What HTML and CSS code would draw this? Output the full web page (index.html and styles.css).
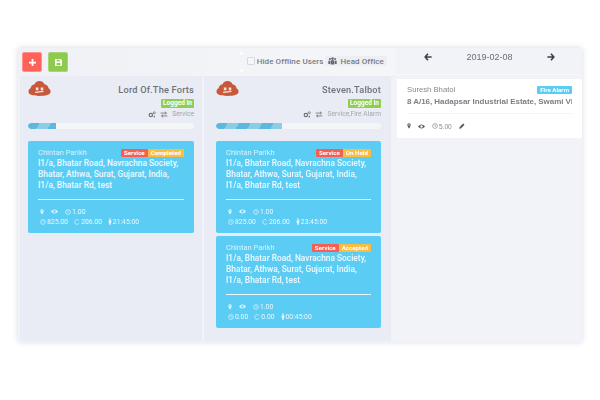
FILE: index.html
```html
<!DOCTYPE html>
<html lang="en">
<head>
<meta charset="utf-8">
<title>Dispatch board</title>
<link rel="stylesheet" href="styles.css">
</head>
<body>
<svg class="sprite" width="0" height="0" aria-hidden="true">
  <symbol id="i-pin" viewBox="0 0 10 14"><path d="M5 0a4.200 4.200 0 0 0-4.200 4.200C.8 7.200 5 13.500 5 13.500S9.200 7.200 9.200 4.200A4.200 4.200 0 0 0 5 0zm0 6a1.800 1.800 0 1 1 0-3.600a1.800 1.800 0 0 1 0 3.600z" fill="currentColor" fill-rule="evenodd"/></symbol>
  <symbol id="i-eye" viewBox="0 0 14 10"><path d="M7 1C3.800 1 1.400 3.200.3 5c1.100 1.800 3.500 4 6.700 4s5.600-2.200 6.700-4C12.600 3.200 10.200 1 7 1zm0 6.500a2.500 2.500 0 1 1 0-5a2.500 2.500 0 0 1 0 5z" fill="currentColor" fill-rule="evenodd"/></symbol>
  <symbol id="i-clock" viewBox="0 0 12 12"><circle cx="6" cy="6" r="4.800" fill="none" stroke="currentColor" stroke-width="1.300"/><path d="M6 3v3.200h2.400" fill="none" stroke="currentColor" stroke-width="1.100"/></symbol>
  <symbol id="i-refresh" viewBox="0 0 12 12"><path d="M9.800 3.200A4.700 4.700 0 1 0 9.800 8.800" fill="none" stroke="currentColor" stroke-width="1.300"/></symbol>
  <symbol id="i-person" viewBox="0 0 8 14"><circle cx="4" cy="2" r="1.700" fill="currentColor"/><path d="M1.500 4.500h5l.5 4.500H5.700l-.2 4.500h-3L2.300 9H1z" fill="currentColor"/></symbol>
  <symbol id="i-cogs" viewBox="0 0 14 12"><circle cx="5" cy="7" r="3" fill="none" stroke="currentColor" stroke-width="2"/><circle cx="11" cy="3" r="1.800" fill="none" stroke="currentColor" stroke-width="1.400"/><circle cx="11" cy="9.800" r="1.400" fill="currentColor"/></symbol>
  <symbol id="i-swap" viewBox="0 0 14 12"><path d="M1 3.500h10M8.500 1l3 2.500-3 2.500M13 8.500H3M5.500 6l-3 2.500 3 2.500" fill="none" stroke="currentColor" stroke-width="1.400"/></symbol>
  <symbol id="i-face" viewBox="0 0 26 18"><path d="M13 .5c3 0 5 1.700 5.600 3.800 3 .3 4.400 2.500 4.600 4.500 1.700.9 2.300 2.200 2.300 3.700 0 3.200-4 5-12.500 5S.5 15.700.5 12.500C.5 10.800 1.500 9.500 3 8.800c.2-2.200 1.800-4.100 4.400-4.500C8 2.200 10 .5 13 .5z" fill="#c8583a"/><path d="M9.500 8.500h1.600v1.800H9.500zM15 8.500h1.600v1.800H15zM8 13.300l9.500-1" stroke="#f3e6e0" stroke-width="1.300" fill="#f3e6e0"/></symbol>
</svg>

<main class="board">
  <section class="users">
    <header class="toolbar">
      <div class="actions">
        <button class="btn btn-add" type="button" aria-label="Add">
          <svg class="btn-icon" viewBox="0 0 8 8"><path d="M3 0h2v3h3v2H5v3H3V5H0V3h3z" fill="currentColor"/></svg>
        </button>
        <button class="btn btn-save" type="button" aria-label="Save">
          <svg class="btn-icon" viewBox="0 0 8 8"><path d="M0 0h6.500L8 1.500V8H0zM2 .8v2h3.500v-2zM1.800 4.500V7.200h4.400V4.500z" fill="currentColor" fill-rule="evenodd"/></svg>
        </button>
      </div>
      <div class="filters">
        <label class="offline"><span class="check"></span>Hide Offline Users</label>
        <span class="office">
          <svg class="office-icon" viewBox="0 0 14 12"><circle cx="3" cy="3" r="1.600" fill="currentColor"/><circle cx="7" cy="2.300" r="2" fill="currentColor"/><circle cx="11" cy="3" r="1.600" fill="currentColor"/><path d="M.5 5.500h3v5h-3zM4.300 5h5.400v6.500H4.300zM10.500 5.500h3v5h-3z" fill="currentColor"/></svg>Head Office
        </span>
      </div>
    </header>

    <div class="columns">
      <article class="column">
        <div class="profile">
          <svg class="avatar"><use href="#i-face"/></svg>
          <div class="who">
            <h2 class="name">Lord Of.The Forts</h2>
            <span class="status">Logged In</span>
            <div class="skills">
              <svg class="sk-icon"><use href="#i-cogs"/></svg>
              <svg class="sk-icon"><use href="#i-swap"/></svg>
              <span>Service</span>
            </div>
          </div>
        </div>
        <div class="progress"><div class="bar" style="width:17%"></div></div>
        <div class="job">
          <div class="job-top">
            <span class="client">Chintan Parikh</span>
            <span class="tags"><span class="tag tag-red">Service</span><span class="tag tag-amber">Completed</span></span>
          </div>
          <p class="address">I1/a, Bhatar Road, Navrachna Society, Bhatar, Athwa, Surat, Gujarat, India, I1/a, Bhatar Rd, test</p>
          <hr class="rule">
          <div class="meta">
            <svg class="m-pin"><use href="#i-pin"/></svg>
            <svg class="m-eye"><use href="#i-eye"/></svg>
            <span class="m"><svg class="m-ic"><use href="#i-clock"/></svg>1.00</span>
          </div>
          <div class="meta">
            <span class="m"><svg class="m-ic"><use href="#i-clock"/></svg>825.00</span>
            <span class="m"><svg class="m-ic"><use href="#i-refresh"/></svg>206.00</span>
            <span class="m"><svg class="m-person"><use href="#i-person"/></svg>21:45:00</span>
          </div>
        </div>
      </article>

      <article class="column column-wide">
        <div class="profile">
          <svg class="avatar"><use href="#i-face"/></svg>
          <div class="who">
            <h2 class="name">Steven.Talbot</h2>
            <span class="status">Logged In</span>
            <div class="skills">
              <svg class="sk-icon"><use href="#i-cogs"/></svg>
              <svg class="sk-icon"><use href="#i-swap"/></svg>
              <span>Service,Fire Alarm</span>
            </div>
          </div>
        </div>
        <div class="progress"><div class="bar" style="width:40%"></div></div>
        <div class="job">
          <div class="job-top">
            <span class="client">Chintan Parikh</span>
            <span class="tags"><span class="tag tag-red">Service</span><span class="tag tag-amber">On Hold</span></span>
          </div>
          <p class="address">I1/a, Bhatar Road, Navrachna Society, Bhatar, Athwa, Surat, Gujarat, India, I1/a, Bhatar Rd, test</p>
          <hr class="rule">
          <div class="meta">
            <svg class="m-pin"><use href="#i-pin"/></svg>
            <svg class="m-eye"><use href="#i-eye"/></svg>
            <span class="m"><svg class="m-ic"><use href="#i-clock"/></svg>1.00</span>
          </div>
          <div class="meta">
            <span class="m"><svg class="m-ic"><use href="#i-clock"/></svg>825.00</span>
            <span class="m"><svg class="m-ic"><use href="#i-refresh"/></svg>206.00</span>
            <span class="m"><svg class="m-person"><use href="#i-person"/></svg>23:45:00</span>
          </div>
        </div>
        <div class="job">
          <div class="job-top">
            <span class="client">Chintan Parikh</span>
            <span class="tags"><span class="tag tag-red">Service</span><span class="tag tag-amber">Accepted</span></span>
          </div>
          <p class="address">I1/a, Bhatar Road, Navrachna Society, Bhatar, Athwa, Surat, Gujarat, India, I1/a, Bhatar Rd, test</p>
          <hr class="rule">
          <div class="meta">
            <svg class="m-pin"><use href="#i-pin"/></svg>
            <svg class="m-eye"><use href="#i-eye"/></svg>
            <span class="m"><svg class="m-ic"><use href="#i-clock"/></svg>1.00</span>
          </div>
          <div class="meta">
            <span class="m"><svg class="m-ic"><use href="#i-clock"/></svg>0.00</span>
            <span class="m"><svg class="m-ic"><use href="#i-refresh"/></svg>0.00</span>
            <span class="m"><svg class="m-person"><use href="#i-person"/></svg>00:45:00</span>
          </div>
        </div>
      </article>
    </div>
  </section>

  <aside class="agenda">
    <header class="datebar">
      <svg class="arrow" viewBox="0 0 10 10"><path d="M5 1L1.500 5 5 9M1.500 5H9.500" fill="none" stroke="currentColor" stroke-width="2"/></svg>
      <span class="date">2019-02-08</span>
      <svg class="arrow" viewBox="0 0 10 10"><path d="M5 1l3.500 4L5 9M8.500 5H.5" fill="none" stroke="currentColor" stroke-width="2"/></svg>
    </header>
    <div class="ticket">
      <div class="ticket-top">
        <span class="t-client">Suresh Bhatol</span>
        <span class="tag tag-blue">Fire Alarm</span>
      </div>
      <p class="t-address">8 A/16, Hadapsar Industrial Estate, Swami Vivekanand Road</p>
      <hr class="t-rule">
      <div class="t-meta">
        <svg class="t-pin"><use href="#i-pin"/></svg>
        <svg class="t-eye"><use href="#i-eye"/></svg>
        <span class="m"><svg class="m-ic"><use href="#i-clock"/></svg>5.00</span>
        <svg class="t-pencil" viewBox="0 0 10 10"><path d="M7 .8L9.200 3 3.200 9 .6 9.400 1 6.800z" fill="currentColor"/></svg>
      </div>
    </div>
  </aside>
</main>
</body>
</html>
```

FILE: styles.css
```css
* { box-sizing: border-box; }
html, body { margin: 0; height: 100%; background: #fff; }
body {
  padding: 48px 0 0 18px;
  font-family: Roboto, "Liberation Sans", sans-serif;
  overflow: hidden;
}
.sprite { position: absolute; }
.board {
  width: 564px;
  height: 294px;
  display: flex;
  background: #f2f3f7;
  box-shadow: 0 0 6px rgba(120, 130, 150, .28);
  filter: blur(.35px);
}
.users { width: 378px; flex: none; display: flex; flex-direction: column; }
.toolbar {
  position: relative;
  height: 29px;
  flex: none;
  padding: 4px 9px 0 4px;
  display: flex;
  justify-content: space-between;
  background: linear-gradient(90deg, #f0f1f6, #f5f6f9);
  border-bottom: 1px solid #e9ebf2;
}
.toolbar::before,
.toolbar::after {
  content: "";
  position: absolute;
  left: 222px;
  width: 3px;
  height: 3px;
  border-radius: 50%;
  background: #fff;
}
.toolbar::before { top: 4px; }
.toolbar::after { top: 21px; }
.actions { display: flex; gap: 6px; }
.btn {
  width: 20px;
  height: 20px;
  padding: 0;
  display: flex;
  align-items: center;
  justify-content: center;
  border: 1px solid transparent;
  border-radius: 2px;
  color: #fff;
}
.btn-add { background: #ff6259; border-color: #ff8f88; }
.btn-save { background: #8fca50; border-color: #a6d774; }
.btn-icon { width: 7px; height: 7px; }
.filters { display: flex; align-items: center; gap: 2px; height: 18px; font-size: 8px; font-weight: 500; letter-spacing: .1px; color: #777b82; }
.offline { display: flex; align-items: center; gap: 2px; }
.check { width: 8px; height: 8px; background: #f5f6f9; border: 1px solid #d7d9df; border-radius: 1px; }
.office { display: flex; align-items: center; gap: 3px; height: 10px; padding: 0 3px; background: #eceef4; border-radius: 2px; }
.office-icon { width: 9px; height: 8px; color: #666a70; }

.columns { flex: 1; display: flex; gap: 1px; padding: 0 0 1px 2px; }
.column {
  width: 183px;
  padding: 0 8px;
  background: #e9ecf4;
  border-right: 1px solid #f0f2f7;
}
.column-wide { width: 188px; padding: 0 10px 0 12px; }
.profile { height: 46px; display: flex; justify-content: space-between; }
.avatar { width: 23px; height: 17px; margin-top: 3px; flex: none; }
.who { display: flex; flex-direction: column; align-items: flex-end; }
.name { margin: 7px 0 3px; font-size: 9.200px; line-height: 12px; font-weight: 500; color: #6e7277; letter-spacing: .2px; }
.status {
  height: 9px;
  padding: 0 2px;
  font-size: 6.500px;
  line-height: 9px;
  font-weight: 700;
  color: #fff;
  background: #8fcf50;
  border-radius: 1px;
}
.skills { display: flex; align-items: center; gap: 4px; margin-top: 2px; font-size: 6.700px; line-height: 9px; color: #a4a7ad; }
.sk-icon { width: 8px; height: 7px; color: #6d7075; }
.progress { height: 6px; background: #f4f5f7; border-radius: 3px; overflow: hidden; }
.bar {
  height: 100%;
  background: repeating-linear-gradient(120deg, #5cb8dc 0 10px, #8ccde6 10px 20px);
  border-radius: 3px 0 0 3px;
}
.job {
  height: 92px;
  margin-top: 12px;
  padding: 7px 10px 0;
  background: #5bcdf5;
  border-radius: 2px;
  color: #e8f8fe;
}
.job + .job { margin-top: 3px; }
.job-top { display: flex; justify-content: space-between; align-items: center; height: 9px; }
.client { font-size: 7.500px; color: #d8f3fc; }
.tags { display: flex; }
.tag { height: 8px; padding: 0 3px; font-size: 6.200px; line-height: 8px; font-weight: 700; color: #fff; border-radius: 1px; }
.tag-red { background: #f75f55; }
.tag-amber { background: #fbbd3f; }
.tag-blue { background: #5bcdf5; }
.address { margin: 1px 0 0; font-size: 8.400px; line-height: 11px; font-weight: 500; color: #eefaff; }
.rule { margin: 8px 0 7px; height: 1px; border: 0; background: #eefaff; }
.meta { display: flex; align-items: center; gap: 6px; height: 9px; margin-bottom: 1px; padding-left: 2px; font-size: 6.800px; }
.m { display: inline-flex; align-items: center; gap: 1px; }
.m-ic { width: 6px; height: 6px; }
.m-pin { width: 4px; height: 6px; margin-right: 1px; }
.m-eye { width: 7px; height: 5px; margin-right: 1px; }
.m-person { width: 4px; height: 7px; }

.agenda { flex: 1; min-width: 0; background: #f2f3f8; }
.datebar {
  height: 27px;
  padding: 0 27px 0 28px;
  display: flex;
  justify-content: space-between;
  align-items: flex-start;
  color: #3d4045;
  border-bottom: 1px solid #f8f9fb;
}
.arrow { width: 8px; height: 8px; margin-top: 5px; }
.date { margin-top: 4px; font-family: "Liberation Sans", sans-serif; font-size: 9px; line-height: 11px; color: #6b6e73; }
.ticket { height: 59px; margin: 4px 0 0 1px; padding: 6px 10px 0; background: #fff; }
.ticket-top { display: flex; justify-content: space-between; align-items: center; height: 9px; }
.t-client { font-family: "Liberation Sans", sans-serif; font-size: 7.700px; color: #85888d; }
.t-address { margin: 2px 0 0; font-family: "Liberation Sans", sans-serif; font-size: 8px; line-height: 11px; font-weight: 700; letter-spacing: -.05px; color: #7d8086; white-space: nowrap; overflow: hidden; }
.t-rule { margin: 6px 0 8px; height: 1px; border: 0; background: #f3f4f6; }
.t-meta { display: flex; align-items: center; gap: 7px; height: 8px; font-family: "Liberation Sans", sans-serif; font-size: 6.500px; color: #85888d; }
.t-pin { width: 4px; height: 6px; color: #55585c; }
.t-eye { width: 7px; height: 5px; color: #55585c; }
.t-pencil { width: 6px; height: 6px; color: #55585c; }
```
